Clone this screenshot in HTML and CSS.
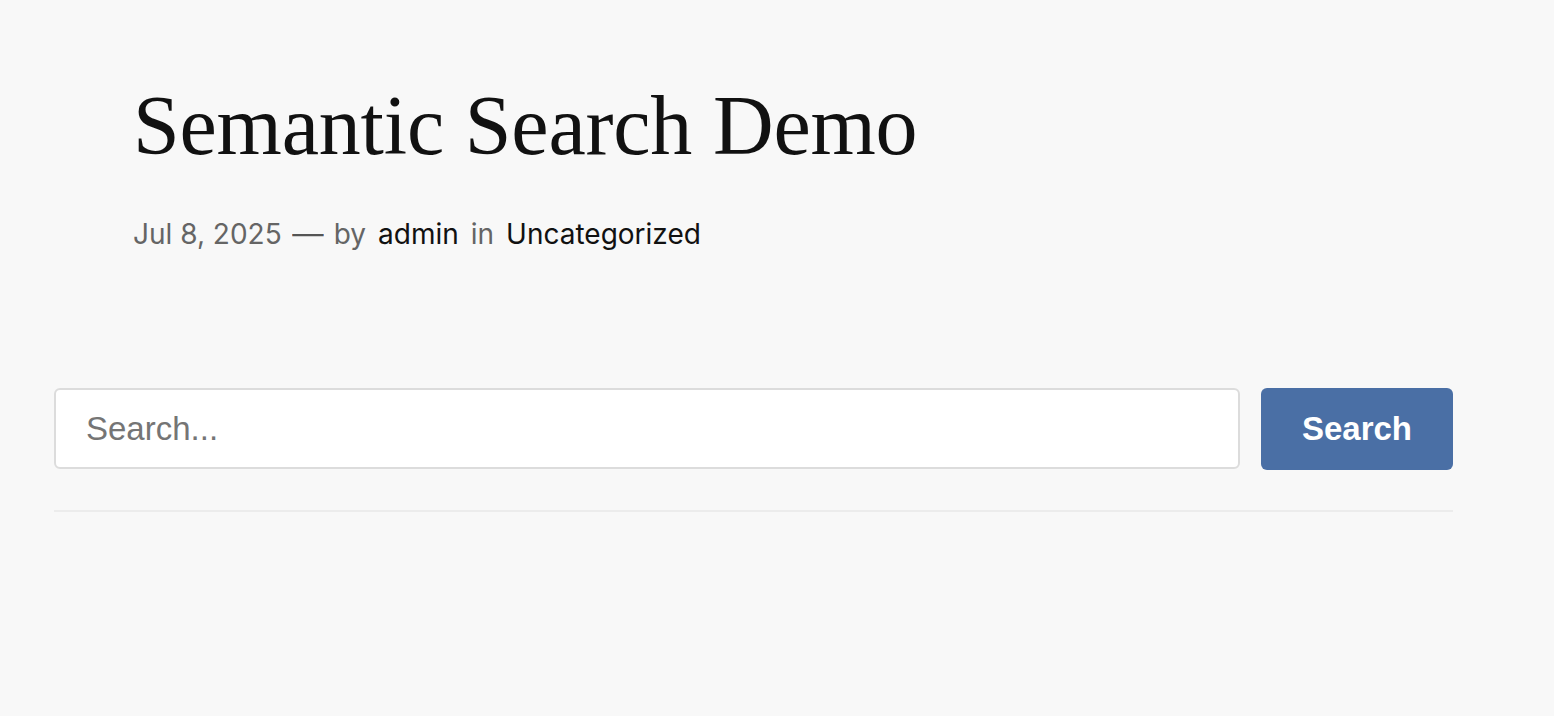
FILE: index.html
```html
<!DOCTYPE html>
<html lang="en">
<head>
<meta charset="utf-8">
<title>Semantic Search Demo</title>
<link rel="stylesheet" href="styles.css">
</head>
<body>
<main class="page">
  <header class="post-header">
    <h1 class="post-title">Semantic Search Demo</h1>
    <div class="post-meta">
      <span class="muted">Jul 8, 2025</span>
      <span class="muted dash">—</span>
      <span class="muted">by</span>
      <a class="meta-link" href="#">admin</a>
      <span class="muted">in</span>
      <a class="meta-link" href="#">Uncategorized</a>
    </div>
  </header>
  <section class="post-content">
    <form class="search-form">
      <input class="search-input" type="text" placeholder="Search...">
      <button class="search-button" type="button">Search</button>
    </form>
    <hr class="divider">
  </section>
</main>
</body>
</html>
```

FILE: styles.css
```css
html, body {
  margin: 0;
  padding: 0;
  background: #f8f8f8;
}
body {
  font-family: "Inter", "Liberation Sans", sans-serif;
  color: #111;
}
.page {
  padding: 0 101px 0 54px;
}
.post-header {
  padding: 76px 0 0 79px;
}
.post-title {
  margin: 0;
  font-family: "Liberation Serif", serif;
  font-weight: 400;
  font-size: 84px;
  line-height: 100px;
  color: #111;
  letter-spacing: -0.2px;
}
.post-meta {
  margin-top: 42px;
  font-size: 28px;
  line-height: 32px;
  display: flex;
  gap: 12px;
}
.muted {
  color: #656565;
}
.dash {
  color: #555;
  display: inline-block;
  transform: scaleX(1.12);
}
.meta-link {
  color: #111;
  text-decoration: none;
}
.post-content {
  padding-top: 138px;
}
.search-form {
  display: flex;
  gap: 21px;
  margin: 0;
}
.search-input {
  flex: 1;
  height: 81px;
  box-sizing: border-box;
  border: 2px solid #dcdcdc;
  border-radius: 6px;
  background: #fff;
  padding: 0 30px;
  font-family: "Liberation Sans", Arial, sans-serif;
  font-size: 33px;
  color: #333;
  outline: none;
}
.search-input::placeholder {
  color: #757575;
}
.search-button {
  width: 192px;
  height: 82px;
  border: none;
  border-radius: 6px;
  background: #4a6fa5;
  color: #fff;
  font-family: "Liberation Sans", Arial, sans-serif;
  font-weight: 700;
  font-size: 33px;
  cursor: pointer;
}
.divider {
  margin: 40px 0 0;
  border: none;
  border-top: 2px solid #ececec;
}
```
